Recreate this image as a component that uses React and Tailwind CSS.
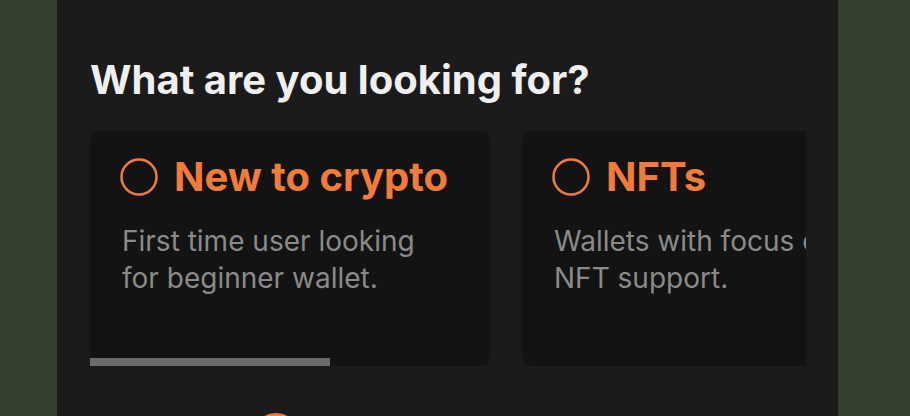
const options = [
  { title: "New to crypto", text: "First time user looking for beginner wallet." },
  { title: "NFTs", text: "Wallets with focus on NFT support." },
];

function Radio({ size = 38 }) {
  return (
    <svg width={size} height={size} viewBox="0 0 38 38" className="shrink-0">
      <circle cx="19" cy="19" r="17.5" fill="none" stroke="#f07b3b" strokeWidth="2.5" />
    </svg>
  );
}

export default function App() {
  return (
    <div className="w-[910px] h-[416px] overflow-hidden bg-[#343f30] flex font-['Inter',sans-serif]">
      <div className="w-[781px] ml-[57px] shrink-0 bg-[#1b1b1b] px-[33px] pt-[56px]">
        <h2 className="text-[40px] leading-[48px] font-bold text-[#efefef]">
          What are you looking for?
        </h2>
        <div className="relative mt-[27px] w-[716px] overflow-hidden">
          <div className="flex gap-8">
            {options.map((o) => (
              <div
                key={o.title}
                className="w-[400px] h-[235px] shrink-0 rounded-lg bg-[#131313] pl-[30px] pr-6 pt-[22px]"
              >
                <div className="flex items-center gap-4">
                  <Radio />
                  <span className="text-[40px] leading-[48px] font-bold text-[#f07b3b]">{o.title}</span>
                </div>
                <p className="mt-[22px] pl-[2px] w-[320px] text-[28px] leading-[37px] text-[#8a8a8a]">
                  {o.text}
                </p>
              </div>
            ))}
          </div>
          <div className="absolute left-0 bottom-0 w-[240px] h-2 bg-[#6b6b6b]" />
        </div>
        <div className="mt-[47px] ml-[162px]">
          <svg width="48" height="48" viewBox="0 0 48 48">
            <circle cx="24" cy="24" r="22.5" fill="none" stroke="#f07b3b" strokeWidth="3" />
          </svg>
        </div>
      </div>
    </div>
  );
}
